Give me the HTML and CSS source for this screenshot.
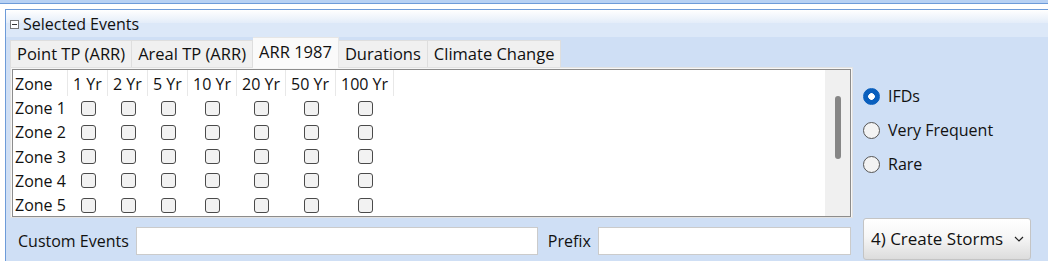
FILE: index.html
```html
<!DOCTYPE html>
<html lang="en">
<head>
  <meta charset="UTF-8">
  <title>Selected Events</title>
  <link rel="stylesheet" href="styles.css">
</head>
<body>

<div class="topbar"></div>

<!-- Selected Events panel -->
<div class="panel">
  <div class="panel-header">
    <span class="collapse-box"></span>
    <span>Selected Events</span>
  </div>

  <div class="panel-body">
    <div class="tabs">
      <div class="tab">Point TP (ARR)</div>
      <div class="tab">Areal TP (ARR)</div>
      <div class="tab tab-active">ARR 1987</div>
      <div class="tab">Durations</div>
      <div class="tab">Climate Change</div>
    </div>

    <div class="tab-content">
      <div class="grid-box">
        <div class="zone-grid">
          <div class="hcell">Zone</div>
          <div class="hcell">1 Yr</div>
          <div class="hcell">2 Yr</div>
          <div class="hcell">5 Yr</div>
          <div class="hcell">10 Yr</div>
          <div class="hcell">20 Yr</div>
          <div class="hcell">50 Yr</div>
          <div class="hcell">100 Yr</div>

          <div class="rlabel">Zone 1</div>
          <div class="cell"><span class="check"></span></div>
          <div class="cell"><span class="check"></span></div>
          <div class="cell"><span class="check"></span></div>
          <div class="cell"><span class="check"></span></div>
          <div class="cell"><span class="check"></span></div>
          <div class="cell"><span class="check"></span></div>
          <div class="cell"><span class="check"></span></div>

          <div class="rlabel">Zone 2</div>
          <div class="cell"><span class="check"></span></div>
          <div class="cell"><span class="check"></span></div>
          <div class="cell"><span class="check"></span></div>
          <div class="cell"><span class="check"></span></div>
          <div class="cell"><span class="check"></span></div>
          <div class="cell"><span class="check"></span></div>
          <div class="cell"><span class="check"></span></div>

          <div class="rlabel">Zone 3</div>
          <div class="cell"><span class="check"></span></div>
          <div class="cell"><span class="check"></span></div>
          <div class="cell"><span class="check"></span></div>
          <div class="cell"><span class="check"></span></div>
          <div class="cell"><span class="check"></span></div>
          <div class="cell"><span class="check"></span></div>
          <div class="cell"><span class="check"></span></div>

          <div class="rlabel">Zone 4</div>
          <div class="cell"><span class="check"></span></div>
          <div class="cell"><span class="check"></span></div>
          <div class="cell"><span class="check"></span></div>
          <div class="cell"><span class="check"></span></div>
          <div class="cell"><span class="check"></span></div>
          <div class="cell"><span class="check"></span></div>
          <div class="cell"><span class="check"></span></div>

          <div class="rlabel">Zone 5</div>
          <div class="cell"><span class="check"></span></div>
          <div class="cell"><span class="check"></span></div>
          <div class="cell"><span class="check"></span></div>
          <div class="cell"><span class="check"></span></div>
          <div class="cell"><span class="check"></span></div>
          <div class="cell"><span class="check"></span></div>
          <div class="cell"><span class="check"></span></div>
        </div>
        <div class="scrollbar"><div class="scroll-thumb"></div></div>
      </div>
    </div>

    <div class="side">
      <div class="radio-row"><span class="radio radio-on"></span>IFDs</div>
      <div class="radio-row"><span class="radio"></span>Very Frequent</div>
      <div class="radio-row"><span class="radio"></span>Rare</div>
    </div>

    <div class="bottom-row">
      <span class="field-label">Custom Events</span>
      <input class="text-box text-box-wide" type="text">
      <span class="field-label">Prefix</span>
      <input class="text-box text-box-prefix" type="text">
    </div>

    <div class="button-cell">
      <button class="storm-button">4) Create Storms
        <svg class="chevron" width="10" height="6" viewBox="0 0 10 6"><path d="M1 1 L5 5 L9 1" fill="none" stroke="#222" stroke-width="1.2"/></svg>
      </button>
    </div>
  </div>
</div>

</body>
</html>
```

FILE: styles.css
```css
body {
  margin: 0;
  background-color: #fff;
  font-family: "Open Sans", Arial, sans-serif;
  font-size: 16px;
  color: #111;
  height: 261px;
  overflow: hidden;
}
.topbar {
  height: 3px;
  background-color: #b7d1f4;
  border-bottom: 1px solid #6d9bd9;
  margin-bottom: 5px;
}
.panel {
  margin-left: 5px;
  border-left: 1px solid #6d9bd9;
  border-top: 1px solid #6d9bd9;
  background-color: #cfdff5;
  height: 260px;
}
.panel-header {
  height: 27px;
  display: flex;
  align-items: center;
  gap: 4px;
  padding-left: 4px;
  background: linear-gradient(#ffffff 0, #e4edf9 13px, #dce8f8 13px, #dce8f8 100%);
}
.collapse-box {
  width: 7px;
  height: 7px;
  border: 1px solid #777;
  background-color: #fff;
  position: relative;
  margin-top: 1px;
}
.collapse-box::after {
  content: "";
  position: absolute;
  left: 1px;
  right: 1px;
  top: 3px;
  height: 1px;
  background-color: #333;
}
.panel-body {
  display: grid;
  grid-template-columns: 847px 1fr;
  grid-template-rows: 30px 151px 44px;
}
/* Tabs */
.tabs {
  display: flex;
  align-items: flex-end;
  padding-left: 4px;
  position: relative;
  z-index: 1;
}
.tab {
  height: 26px;
  line-height: 26px;
  padding: 0 6px;
  font-size: 16.5px;
  background-color: #f0f0f0;
  border: 1px solid #dedede;
  border-bottom: none;
}
.tab + .tab {
  border-left: none;
}
.tab-active {
  height: 30px;
  line-height: 28px;
  background-color: #fafafa;
  margin-bottom: -1px;
  border-color: #e6e6e6;
}
.tab-content {
  margin-left: 4px;
  border: 1px solid #e2e2e2;
  background-color: #f7f7f7;
  padding: 1px;
}
.grid-box {
  height: 146px;
  border: 1px solid #8c8c8c;
  background-color: #fff;
  display: flex;
  overflow: hidden;
}
.zone-grid {
  flex: 1;
  display: grid;
  grid-template-columns: 55px 40px 40px 40px 49px 49px 50px 58px;
  grid-template-rows: 26px repeat(5, 24.25px);
  align-content: start;
}
.hcell {
  padding-left: 5px;
  line-height: 28px;
  border-right: 1px solid #e8e8e8;
  white-space: nowrap;
}
.hcell:first-child {
  padding-left: 2px;
}
.rlabel {
  padding-left: 2px;
  line-height: 24px;
  white-space: nowrap;
}
.cell {
  display: flex;
  align-items: center;
  justify-content: center;
}
.check {
  width: 13px;
  height: 13px;
  border: 1px solid #4a4a4a;
  border-radius: 3px;
  background-color: #f2f2f2;
}
.scrollbar {
  width: 25px;
  background-color: #f0f0f0;
  position: relative;
}
.scroll-thumb {
  position: absolute;
  left: 10px;
  top: 26px;
  width: 6px;
  height: 63px;
  border-radius: 3px;
  background-color: #868686;
}
/* Radios */
.side {
  grid-row: 1 / 3;
  grid-column: 2;
  padding: 42px 0 0 10px;
}
.radio-row {
  height: 34px;
  display: flex;
  align-items: center;
  gap: 8px;
}
.radio {
  width: 15px;
  height: 15px;
  border: 1px solid #555;
  border-radius: 50%;
  background-color: #f3f3f3;
}
.radio-on {
  border-color: #0a5fbd;
  background: radial-gradient(circle, #fff 0, #fff 3px, #0a5fbd 3.6px);
}
/* Bottom row */
.bottom-row {
  display: flex;
  align-items: center;
  padding: 9px 0 0 12px;
  align-self: start;
}
.field-label {
  margin-right: 7px;
}
.text-box {
  border: 1px solid #cbcbcb;
  background-color: #fff;
  padding: 0;
  box-sizing: border-box;
  height: 28px;
  margin-right: 10px;
}
.text-box-wide {
  width: 402px;
}
.text-box-prefix {
  width: 253px;
  margin-right: 0;
}
.button-cell {
  padding-left: 10px;
}
.storm-button {
  width: 168px;
  height: 42px;
  border: 1px solid #c4c4c4;
  border-radius: 3px;
  background: linear-gradient(#ffffff 0, #f6f6f6 45%, #dcdcdc 100%);
  font-family: "Open Sans", Arial, sans-serif;
  font-size: 17px;
  color: #111;
  text-align: left;
  padding: 0 0 2px 7px;
  position: relative;
}
.chevron {
  position: absolute;
  right: 6px;
  top: 17px;
}
```
